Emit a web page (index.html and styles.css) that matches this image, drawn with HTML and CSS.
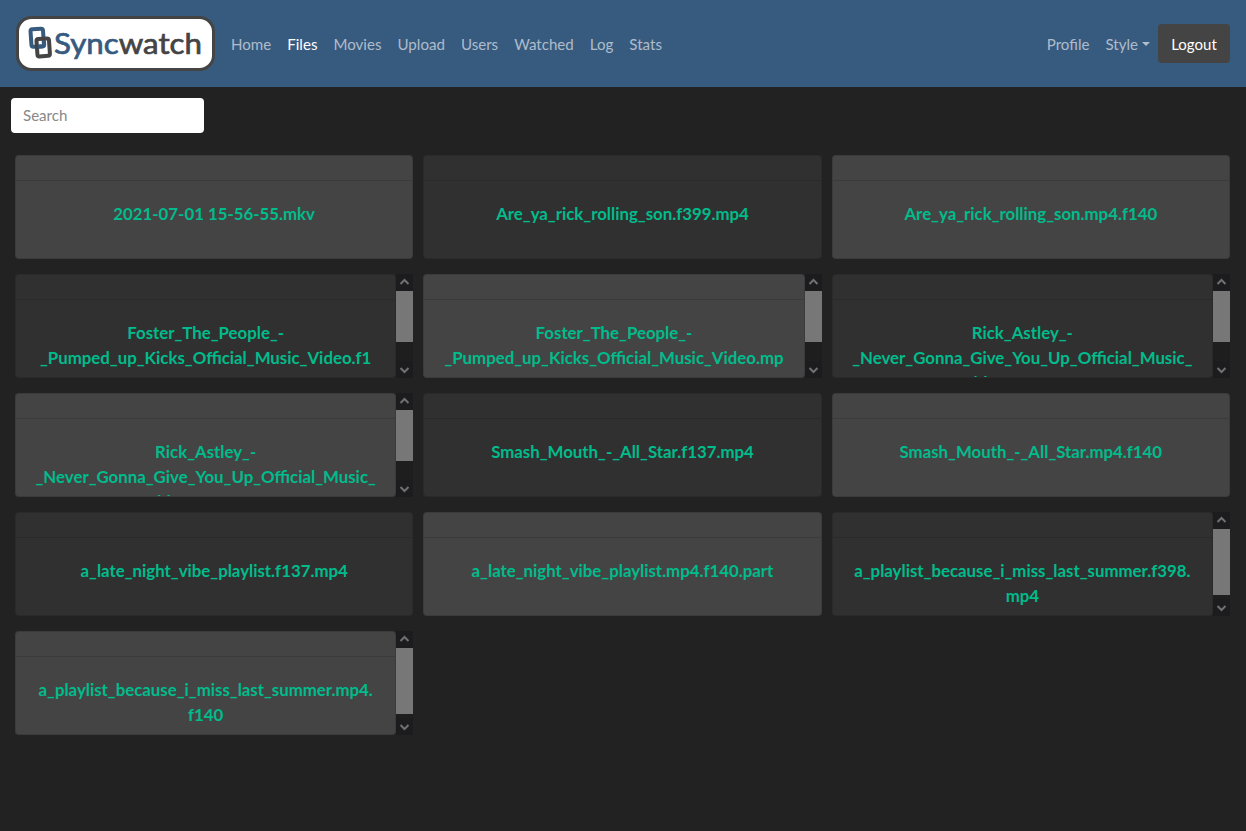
FILE: index.html
```html
<!DOCTYPE html>
<html lang="en">
<head>
<meta charset="utf-8">
<title>Syncwatch</title>
<link rel="stylesheet" href="styles.css">
</head>
<body>
<nav class="navbar">
  <a class="brand" aria-label="Syncwatch">
    <svg width="199" height="55" viewBox="0 0 199 55">
      <rect x="1.5" y="1.5" width="196" height="52" rx="14" fill="#fff" stroke="#444" stroke-width="3"/>
      <g fill="none" stroke-width="4" stroke-linejoin="round">
        <rect x="15" y="13" width="12.500" height="17.500" rx="2" stroke="#375a7f" transform="rotate(-4 21 22)"/>
        <rect x="21" y="22.700" width="12.500" height="17.500" rx="2" stroke="#444" transform="rotate(-4 27 32)"/>
        <path d="M22 30.800l4.500-.4q1.700-.2 1.700-2.200l-.3-3.500" stroke="#375a7f"/>
      </g>
      <text class="wordmark" x="38" y="38" textLength="148" lengthAdjust="spacingAndGlyphs"><tspan class="sync">Sync</tspan><tspan class="watch">watch</tspan></text>
    </svg>
  </a>
  <div class="links">
    <a>Home</a><a class="active">Files</a><a>Movies</a><a>Upload</a><a>Users</a><a>Watched</a><a>Log</a><a>Stats</a>
  </div>
  <div class="links end">
    <a>Profile</a><a class="dropdown">Style</a>
  </div>
  <button class="logout">Logout</button>
</nav>
<input class="search" type="text" placeholder="Search">
<main class="files" id="files"></main>
<script src="files.js"></script>
</body>
</html>
```
FILE: styles.css
```css
* { box-sizing: border-box; }
body {
  margin: 0;
  height: 831px;
  overflow: hidden;
  background: #222;
  font: 15px/1.5 Lato, sans-serif;
}
.navbar {
  display: flex;
  align-items: center;
  height: 87px;
  padding: 0 16px;
  background: #375a7f;
}
.brand { height: 55px; margin-right: 8px; }
.brand svg { display: block; }
.wordmark { font: 400 29.5px Lato, sans-serif; stroke-width: .7; }
.sync { fill: #375a7f; stroke: #375a7f; }
.watch { fill: #444; stroke: #444; }
.links { display: flex; margin-top: 2px; font-size: 15.1px; }
.links a { padding: 8px; color: rgba(255, 255, 255, .6); }
.links .active { color: #fff; }
.end { margin-left: auto; }
.dropdown::after {
  content: "";
  display: inline-block;
  margin-left: 4px;
  vertical-align: 4px;
  border: 4px solid transparent;
  border-top-color: currentColor;
  border-bottom: 0;
}
.logout {
  width: 72px;
  height: 39px;
  border: 0;
  border-radius: 4px;
  background: #444;
  color: #fff;
  font: 15px/22px Lato, sans-serif;
}
.search {
  display: block;
  width: 193px;
  height: 35px;
  margin: 11px 0 22px 11px;
  padding: 0 12px 2px;
  border: 0;
  border-radius: 4px;
  font: 15.1px Lato, sans-serif;
}
.search::placeholder { color: #888; }
.files {
  display: grid;
  grid-template-columns: repeat(3, 1fr);
  gap: 15px 10px;
  margin: 0 16px 0 15px;
}
.cell { display: flex; height: 104px; min-width: 0; }
.card {
  flex: 1;
  min-width: 0;
  overflow: hidden;
  border: 1px solid rgba(0, 0, 0, .125);
  border-radius: 4px;
  background: #303030;
}
.card.light { background: #444; }
.card-header { height: 25px; border-bottom: 1px solid rgba(0, 0, 0, .125); }
.title {
  margin: 20px 0 0;
  color: #00bc8c;
  font: 700 16.82px/25px Lato, sans-serif;
  text-align: center;
  white-space: nowrap;
}
.scrollbar { flex: 0 0 17px; display: flex; flex-direction: column; background: #1e1e1e; }
.scrollbar svg { display: block; flex: none; background: #1c1c1e; fill: none; stroke: #707070; stroke-width: 2; }
.thumb { height: 51px; margin-bottom: auto; background: #777; }
.thumb.long { height: 66px; }
```
FILE: files.js
```js
const files = [
  { lines: ["2021-07-01 15-56-55.mkv"] },
  { lines: ["Are_ya_rick_rolling_son.f399.mp4"] },
  { lines: ["Are_ya_rick_rolling_son.mp4.f140"] },
  { lines: ["Foster_The_People_-", "_Pumped_up_Kicks_Official_Music_Video.f1", "37.mp4"] },
  { lines: ["Foster_The_People_-", "_Pumped_up_Kicks_Official_Music_Video.mp", "4.f140"] },
  { lines: ["Rick_Astley_-", "_Never_Gonna_Give_You_Up_Official_Music_", "Video.f399.mp4"] },
  { lines: ["Rick_Astley_-", "_Never_Gonna_Give_You_Up_Official_Music_", "Video.mp4.f140"] },
  { lines: ["Smash_Mouth_-_All_Star.f137.mp4"] },
  { lines: ["Smash_Mouth_-_All_Star.mp4.f140"] },
  { lines: ["a_late_night_vibe_playlist.f137.mp4"] },
  { lines: ["a_late_night_vibe_playlist.mp4.f140.part"] },
  { lines: ["a_playlist_because_i_miss_last_summer.f398.", "mp4"] },
  { lines: ["a_playlist_because_i_miss_last_summer.mp4.", "f140"] }
];

const arrow = d => `<svg width="17" height="17" viewBox="0 0 17 17"><path d="${d}"/></svg>`;

document.getElementById("files").innerHTML = files.map(({ lines }, i) => `
  <div class="cell">
    <div class="card ${i % 2 ? "" : "light"}">
      <div class="card-header"></div>
      <h5 class="title">${lines.join("<br>")}</h5>
    </div>
    ${lines.length > 1 ? `<div class="scrollbar">
      ${arrow("M4.500 10l4-4 4 4")}
      <div class="thumb ${lines.length === 2 ? "long" : ""}"></div>
      ${arrow("M4.500 7l4 4 4-4")}
    </div>` : ""}
  </div>`).join("");
```
